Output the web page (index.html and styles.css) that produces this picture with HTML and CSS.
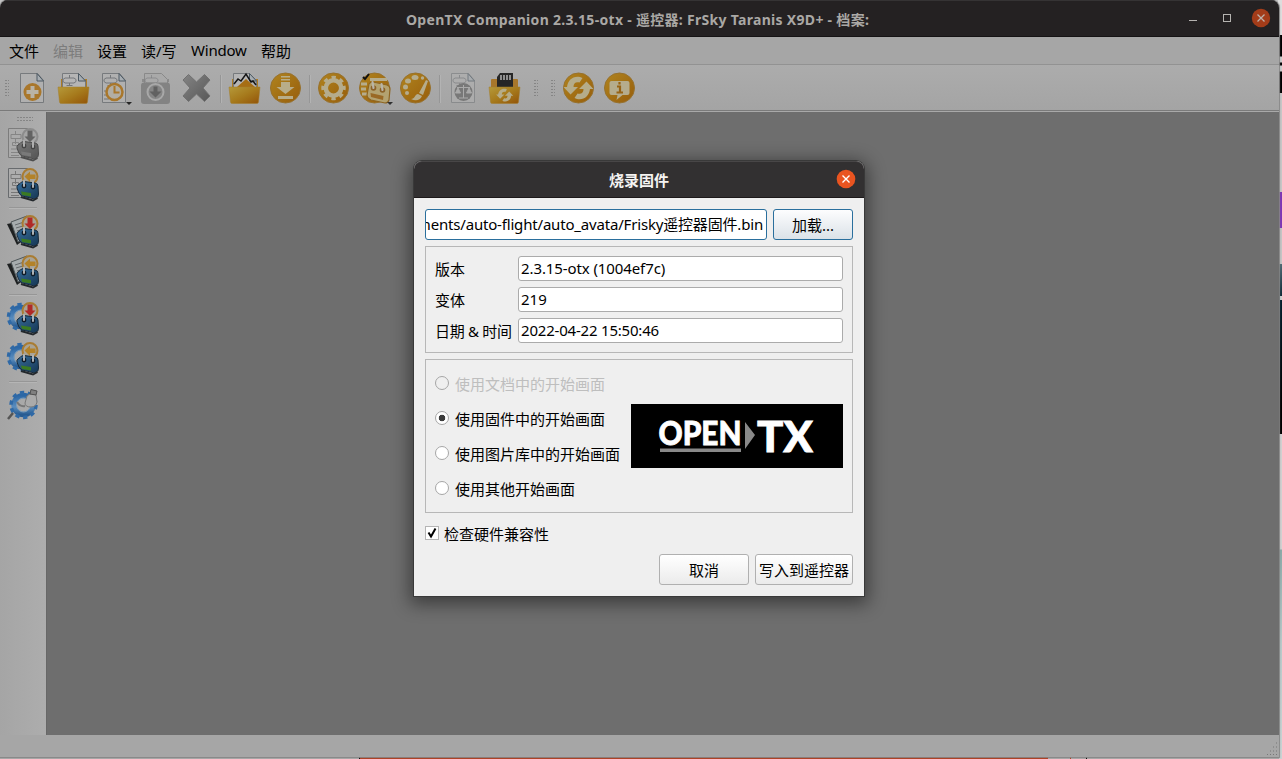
FILE: index.html
```
<!DOCTYPE html>
<html lang="zh-CN">
<head>
<meta charset="utf-8">
<title>OpenTX Companion</title>
<link rel="stylesheet" href="styles.css">
</head>
<body>
<svg class="defs" aria-hidden="true">
  <defs>
    <linearGradient id="gold" x1="0" y1="0" x2="1" y2="1"><stop offset="0" stop-color="#b0841f"/><stop offset="1" stop-color="#975d0b"/></linearGradient>
    <linearGradient id="folderFill" x1="0" y1="0" x2="1" y2="1"><stop offset="0" stop-color="#b5993a"/><stop offset=".5" stop-color="#a67a1c"/><stop offset="1" stop-color="#925308"/></linearGradient>
    <linearGradient id="greyFill" x1="0" y1="0" x2="1" y2="1"><stop offset="0" stop-color="#848484"/><stop offset="1" stop-color="#575757"/></linearGradient>
    <linearGradient id="radioFill" x1="0" y1="0" x2="1" y2="1"><stop offset="0" stop-color="#376d9a"/><stop offset="1" stop-color="#153653"/></linearGradient>
    <linearGradient id="gearFill" x1="0" y1="0" x2="0" y2="1"><stop offset="0" stop-color="#2c67a5"/><stop offset=".6" stop-color="#5a8dbe"/><stop offset="1" stop-color="#285b91"/></linearGradient>
    <g id="page"><path d="M8.500 8.500h17l6 7v22h-23z" fill="#b0b0b0" stroke="#777a7d"/><path d="M25 8.500v7.500h6.500z" fill="#a7adb2" stroke="#4c5963"/></g>
    <g id="model" fill="none" stroke="#74777a"><path d="M16.500 10v3M10 14.500l2-1.500h9l2 1.500v2l-2 1.500h-9l-2-1.500zM16.500 18v3M13.500 20.500h6"/></g>
    <g id="backpapers"><path d="M8 14v11h26V14h-3" fill="#ad7c25"/><path d="M9.500 8.500h16l7 7V27h-23z" fill="#b5b5b5" stroke="#777a7d"/><path d="M25.500 8.500v7.500h7z" fill="#a7adb2" stroke="#4c5963"/></g>
    <path id="folder" d="M5 22h31l-1.500 15q0 1.500-2 1.500h-24q-2 0-2-1.500z" fill="url(#folderFill)" stroke="#a27c2c" stroke-width=".5"/>
    <g id="disc"><circle cx="20.500" cy="23" r="15" fill="url(#gold)" stroke="#97712d"/></g>
    <g id="cycle"><path d="M5.500 22h3.500C10 15 15 10.500 22 12l2.500 1-3 4.500c-4-1-6 1-6 4.500h4.500l-7.500 7.500z" fill="#b5ac8a"/><path d="M35.500 24H32c-1 7-6 11.500-13 10l-2.500-1 3-4.500c4 1 6-1 6-4.500H21l7.500-7.500z" fill="#b5ac8a"/></g>
    <g id="radio">
      <path d="M20 19.500q1-2 4-2l11 1.500q3 .5 3 3l.500 8q0 3-2 4l-2 1-12-3q-3-1-4-4l-1.500-4q-.5-2 1-3z" fill="url(#radioFill)" stroke="#17293a"/>
      <path d="M21 33l12 3.500 4.500-2.500" fill="none" stroke="#23282c" stroke-width="2"/>
      <path d="M21 27.500l10 1.500v3.500l-9-1.500z" fill="#3b7a22"/>
      <circle cx="24" cy="22" r="2.400" fill="#101c28"/><circle cx="33" cy="23" r="2.400" fill="#101c28"/>
      <path d="M24 22v-5.500M33 23v-5.500" stroke="#aeb2b5" stroke-width="2" stroke-linecap="round"/>
    </g>
    <g id="ring"><circle cx="30" cy="12.500" r="7.500" fill="#a9a395" stroke="#a97c32" stroke-width="2"/></g>
    <path id="arrowLeft" d="M24.500 12.500l5.500-5v3h5.500v4.500h-5.500v3z" fill="#b38228"/>
    <path id="arrowDown" d="M30 18l-5.500-5.500h3V6.500h5v6h3z" fill="#b02a27"/>
    <g id="sidePage"><path d="M8.500 4.500h19v29h-19z" fill="#adadad" stroke="#686b6e"/><path d="M15.500 7v3M11 10.500h10v4H11zM15.500 15v5M12.500 18.500h6v3h-6zM11 25h8M11 28.500h8M11 31.500h8" fill="none" stroke="#777"/></g>
    <g id="chip"><path d="M7 13l10 21 4-3-9-19z" fill="#1e2021"/><path d="M11 11l16-6 6 18-15 8z" fill="#a6acae" stroke="#4e5659"/><path d="M15 14l9-3M16 17l7-2M17 20l6-2M18 23l5-2" stroke="#656a6d"/></g>
    <g id="gear"><circle cx="21" cy="19" r="9.500" fill="none" stroke="url(#gearFill)" stroke-width="5.500"/><circle cx="21" cy="19" r="12.500" fill="none" stroke="#2f69a6" stroke-width="3.500" stroke-dasharray="4.200 3.654"/><circle cx="21" cy="19" r="7" fill="none" stroke="#7d9dba" stroke-width="1"/></g>
  </defs>
</svg>

<div class="desktop">
  <div class="behind">
    <i class="b-top"></i><i class="b-black"></i><i class="b-light"></i><i class="b-purple"></i><i class="b-light2"></i><i class="b-sea"></i><i class="b-rest"></i>
  </div>
  <div class="behind-bottom"><i class="strip"></i><i class="tick"></i><i class="tick dark"></i></div>

  <main class="window">
    <header class="titlebar">
      <h1 class="title">OpenTX Companion 2.3.15-otx - 遥控器: FrSky Taranis X9D+ - 档案:</h1>
      <svg class="controls" width="90" height="36" viewBox="0 0 90 36">
        <path d="M0 20.500h8" stroke="#b5b3b0"/><rect x="34.500" y="14.500" width="7" height="7" fill="none" stroke="#b5b3b0"/>
        <circle cx="72" cy="18" r="9.200" fill="#a33c19"/><path d="M68.500 14.500l7 7m0-7l-7 7" stroke="#bdb1aa" stroke-width="1.300"/>
      </svg>
    </header>
    <nav class="menu">
      <span class="m1">文件</span><span class="m2 off">编辑</span><span class="m3">设置</span><span class="m4">读/写</span><span class="m5">Window</span><span class="m6">帮助</span>
    </nav>
    <div class="toolbar">
      <i class="grip first"></i>
      <svg class="tool" viewBox="0 0 41 45"><use href="#page"/><circle cx="20.500" cy="27" r="9" fill="#a9772b"/><path d="M20.500 21v12M14.500 27h12" stroke="#b9b3a6" stroke-width="4"/></svg>
      <svg class="tool" viewBox="0 0 41 45"><use href="#backpapers"/><use href="#model"/><use href="#folder"/></svg>
      <svg class="tool" viewBox="0 0 41 45"><use href="#page"/><use href="#model"/><path d="M10 26h4M10 30h4M10 34h5" stroke="#777"/><circle cx="20.500" cy="27" r="8" fill="#b2aea4" stroke="#a9772b" stroke-width="2.500"/><path d="M20.500 21v6.500h5" fill="none" stroke="#a9772b" stroke-width="2"/><path d="M32 37h6l-3 3z" fill="#252525"/></svg>
      <svg class="tool" viewBox="0 0 41 45"><path d="M7 17v-3h27v3" fill="#8b8b8b"/><path d="M9.500 17V8.500h17l6 6V20h-23z" fill="#a9a9a9" stroke="#898989"/><use href="#model" opacity=".55"/><rect x="6" y="17.500" width="29" height="21.500" rx="3" fill="#838383"/><circle cx="20.500" cy="27" r="8" fill="#858585" stroke="#a8a8a8" stroke-width="2"/><path d="M18.500 21.500h4v5h4l-6 6-6-6h4z" fill="#616161"/></svg>
      <svg class="tool" viewBox="0 0 41 45"><path d="M12.500 9.500l8 7.500 8-7.500 5.500 5.500-7 8 7 8-5.500 5.500-8-7.500-8 7.500L7 31l7-8-7-8z" fill="url(#greyFill)" stroke="#707070" stroke-linejoin="round"/></svg>
      <i class="sep"></i>
      <svg class="tool" viewBox="0 0 41 45"><use href="#backpapers"/><path d="M13 22l9-8 9 8z" fill="#a66e14"/><path d="M10 19l4-5 3 2 5-7 5 8 2-1 3 4" fill="none" stroke="#151515" stroke-width="1.500"/><use href="#folder"/></svg>
      <svg class="tool" viewBox="0 0 41 45"><use href="#disc"/><path d="M16 11h9v1.500h-9zM16 14h9v1.500h-9zM16 17h9v5h4.500L20.500 29l-9-7H16zM13 31h15v3H13z" fill="#b8ad89"/></svg>
      <i class="sep"></i>
      <svg class="tool" viewBox="0 0 41 45"><use href="#disc"/><circle cx="20.500" cy="23" r="7.700" fill="none" stroke="#b5ac8d" stroke-width="4.500"/><circle cx="20.500" cy="23" r="10.500" fill="none" stroke="#b5ac8d" stroke-width="3.500" stroke-dasharray="4.100 4.147" transform="rotate(-12 20.500 23)"/></svg>
      <svg class="tool" viewBox="0 0 41 45"><use href="#disc"/><path d="M16 14.500h17M7 19h6M7 24h5M8 29h5" stroke="#b5ac8d" stroke-width="3"/><path d="M9 12l2 2 4-5" stroke="#111" stroke-width="2" fill="none"/><path d="M15 19q1-2 4-2l14 3q3 1 3 4l-1 11q-1 3-4 3l-14-3q-4-2-4-5z" fill="#b3a270" stroke="#8e6521" stroke-width="1.200"/><circle cx="19.500" cy="23" r="2.800" fill="#8b6128"/><circle cx="28.500" cy="25" r="2.800" fill="#8b6128"/><path d="M19.500 23l-1-6M28.500 25l-1-6" stroke="#b9b4a7" stroke-width="2.200" stroke-linecap="round"/><path d="M16.500 28l13 3-.5 4-12-3z" fill="#9a6925"/><path d="M33 37h6l-3 3z" fill="#303030"/></svg>
      <svg class="tool" viewBox="0 0 41 45"><use href="#disc"/><g fill="#b5ac8d"><ellipse cx="20" cy="12.500" rx="3.500" ry="2.500"/><ellipse cx="13" cy="16" rx="3" ry="2.500"/><circle cx="10.500" cy="22" r="2.500"/><circle cx="12" cy="28" r="2"/><circle cx="27.500" cy="13" r="1.700"/><path d="M31 15l2 1-5 14-4-2zM23 29l4 2c-2 5-7 5-11 3 4 0 4-5 7-5z"/></g></svg>
      <i class="sep"></i>
      <svg class="tool" viewBox="0 0 41 45"><g opacity=".6"><use href="#page"/><use href="#model"/></g><circle cx="20.500" cy="27" r="9" fill="#787878"/><path d="M20.500 20v13M14 22.500h13M16 33h9M15 23l-2.500 5h5zM26 23l-2.500 5h5z" stroke="#aaa" fill="#aaa"/></svg>
      <svg class="tool" viewBox="0 0 41 45"><path d="M7 23v-8q0-1 1-1h25q1 0 1 1v8z" fill="#a8772b"/><path d="M13 22V12l3-4h13v14z" fill="#262626"/><path d="M17 10v5M20 10v5M23 10v5M26 10v5" stroke="#aaa" stroke-width="1.600"/><use href="#folder"/><use href="#cycle" transform="translate(9 17) scale(.57)"/></svg>
      <i class="grip second"></i><i class="grip third"></i>
      <svg class="tool" viewBox="0 0 41 45"><use href="#disc"/><use href="#cycle"/></svg>
      <svg class="tool" viewBox="0 0 41 45"><use href="#disc"/><path d="M12.500 16h16q2 0 2 2v10q0 2-2 2h-5l-6 5 1-5h-6q-2 0-2-2V18q0-2 2-2z" fill="#b5ac8d"/><path d="M20.500 17v2.500M18 21.500h3v5.500M17.500 27.500h6.500" fill="none" stroke="#976315" stroke-width="2.200"/></svg>
    </div>
    <div class="workspace">
      <aside class="side">
        <i class="grip side-grip"></i>
        <svg class="stool grey" viewBox="0 0 46 40"><use href="#sidePage"/><use href="#ring"/><use href="#arrowDown"/><use href="#radio"/></svg>
        <svg class="stool" viewBox="0 0 46 40"><use href="#sidePage"/><use href="#ring"/><use href="#arrowLeft"/><use href="#radio"/></svg>
        <i class="hsep"></i>
        <svg class="stool" viewBox="0 0 46 40"><use href="#chip"/><use href="#ring"/><use href="#arrowDown"/><use href="#radio"/></svg>
        <svg class="stool" viewBox="0 0 46 40"><use href="#chip"/><use href="#ring"/><use href="#arrowLeft"/><use href="#radio"/></svg>
        <i class="hsep"></i>
        <svg class="stool" viewBox="0 0 46 40"><use href="#gear"/><use href="#ring"/><use href="#arrowDown"/><use href="#radio"/></svg>
        <svg class="stool" viewBox="0 0 46 40"><use href="#gear"/><use href="#ring"/><use href="#arrowLeft"/><use href="#radio"/></svg>
        <i class="hsep"></i>
        <svg class="stool" viewBox="0 0 46 40"><use href="#gear" transform="translate(2.500 1)"/><path d="M8 34l5-6" fill="none" stroke="#555" stroke-width="2.500"/><path d="M17 17q3 5 8 4" fill="none" stroke="#777" stroke-width="2"/><path d="M27 11q4-4 9-1l1 7q-1 5-6 5-6 0-6-4z" fill="#aaa" stroke="#777"/><path d="M31 4.500l6 1.500-1 4-6-1z" fill="#808080" stroke="#505050"/></svg>
      </aside>
      <section class="canvas"></section>
    </div>
    <footer class="status"><svg width="16" height="14" viewBox="0 0 16 14"><path d="M13 1h1M10 5h1M13 5h1M7 9h1M10 9h1M13 9h1M4 12.500h1M7 12.500h1M10 12.500h1M13 12.500h1" stroke="#777"/></svg></footer>
  </main>

  <section class="dialog">
    <header class="dialog-title"><h2>烧录固件</h2>
      <svg width="20" height="20" viewBox="0 0 20 20"><circle cx="10" cy="10" r="9.300" fill="#e95420"/><path d="M6.500 6.500l7 7m0-7l-7 7" stroke="#fff" stroke-width="1.400"/></svg>
    </header>
    <div class="dialog-body">
      <div class="file-row"><div class="path"><span>ments/auto-flight/auto_avata/Frisky遥控器固件.bin</span></div><button class="btn focus">加载...</button></div>
      <div class="group info">
        <span class="label">版本</span><div class="field"><span class="v1">2.3.15-otx (1004ef7c)</span></div>
        <span class="label">变体</span><div class="field"><span class="v2">219</span></div>
        <span class="label tight">日期 &amp; 时间</span><div class="field"><span class="v3">2022-04-22 15:50:46</span></div>
      </div>
      <div class="group splash">
        <div class="radios">
          <div class="choice disabled"><i class="dot"></i><span>使用文档中的开始画面</span></div>
          <div class="choice"><i class="dot on"></i><span>使用固件中的开始画面</span></div>
          <div class="choice"><i class="dot"></i><span>使用图片库中的开始画面</span></div>
          <div class="choice"><i class="dot"></i><span>使用其他开始画面</span></div>
        </div>
        <svg class="logo" width="212" height="64" viewBox="0 0 212 64">
          <rect width="212" height="64"/>
          <text class="logo-text" x="27.500" y="41" font-size="32" textLength="83" lengthAdjust="spacingAndGlyphs">OPEN</text>
          <path d="M29 44.500h81v3.500H29zM114 18l10 13-10 14z" fill="#898989"/>
          <text class="logo-text" x="126" y="48" font-size="42" textLength="56" lengthAdjust="spacingAndGlyphs">TX</text>
        </svg>
      </div>
      <div class="check"><i class="box"><svg width="12" height="12" viewBox="0 0 12 12"><path d="M2.500 5.500l2.500 4 4.500-8" fill="none" stroke="#000" stroke-width="2"/></svg></i><span>检查硬件兼容性</span></div>
      <div class="actions"><button class="btn cancel">取消</button><button class="btn write">写入到遥控器</button></div>
    </div>
  </section>
</div>
</body>
</html>
```
FILE: styles.css
```
* { box-sizing: border-box; }
body { margin: 0; font: 15px/20px "Noto Sans", "Noto Sans CJK SC", sans-serif; color: #000; overflow: hidden; }
i { font-style: normal; display: block; }
.defs { position: absolute; width: 0; height: 0; }
.desktop { position: relative; width: 1282px; height: 759px; background: #c4c4c4; overflow: hidden; }

/* Content of the windows that lie behind the main one */
.behind { position: absolute; inset: 0 0 0 auto; width: 4px; overflow: hidden; }
.b-top { height: 35px; background: #ddd; }
.b-black { height: 58px; background: linear-gradient(#000 21px, #ccc 22px 27px, #000 28px 30px, #ccc 31px 36px, #000 37px); }
.b-light { height: 99px; background: #c6c6c6; }
.b-purple { height: 36px; background: #7d35b5; }
.b-light2 { height: 36px; background: #c4c4c4; }
.b-sea { height: 170px; background: linear-gradient(#ccc, #ccc) 2px 32px / 2px 4px no-repeat, linear-gradient(#4f6a74, #04202d 22%, #000 85%); }
.b-rest { height: 325px; background: linear-gradient(#d0d0d0 115px, #8aaaa8 116px, #b7c9c9 210px, #c9d3d3); }
.behind-bottom { position: absolute; left: 0; bottom: 0; width: 1279px; height: 2px; display: flex; background: #aaa; padding-left: 359px; }
.strip { width: 689px; height: 2px; background: #b33b1c; border-left: 1px solid #000; }
.tick { width: 1px; height: 2px; margin-left: 22px; background: #b33b1c; }
.tick.dark { margin-left: 15px; background: #000; }

.window { position: relative; width: 1279px; height: 757px; display: flex; flex-direction: column; background: #a6a6a6; border-radius: 8px 8px 0 0; overflow: hidden; box-shadow: 0 0 1px 1px #858585; }
.titlebar { height: 37px; flex: none; display: flex; align-items: center; background: #242122; border-top: 1px solid #353334; border-bottom: 1px solid #151314; }
.title { margin: 2px 0 0 406px; width: 783px; font-size: 14px; line-height: 20px; font-weight: 700; color: #aaa8a5; white-space: nowrap; letter-spacing: .3px; }
.controls { margin-top: -1px; }
.menu { height: 28px; flex: none; display: flex; padding: 4px 0 0 9px; border-bottom: 1px solid #929292; white-space: nowrap; }
.menu span { line-height: 20px; }
.m1, .m2, .m3 { width: 44px; }
.m4 { width: 50px; }
.m5 { width: 70px; letter-spacing: -.2px; margin-top: -1px; }
.off { color: #7c7c7c; }
.toolbar { height: 47px; flex: none; display: flex; background: linear-gradient(#acacac, #a4a4a4); border-bottom: 1px solid #a9a9a9; box-shadow: inset 0 -1px #7a7a7a; }
.tool { width: 41px; height: 45px; flex: none; }
.sep { width: 7px; flex: none; height: 28px; margin-top: 10px; background: linear-gradient(90deg, transparent 3px, #969696 3px 4px, #b3b3b3 4px 5px, transparent 5px); }
.grip { flex: none; width: 5px; height: 17px; margin-top: 15px; background: conic-gradient(from 90deg at 1px 1px, transparent 75%, #858585 0) 0 0 / 3px 3px; }
.first { margin-left: 4px; margin-right: 3px; }
.second { margin-left: 8px; }
.third { margin-left: 12px; margin-right: 3px; }
.workspace { flex: 1; display: flex; min-height: 0; }
.side { width: 46px; display: flex; flex-direction: column; background: linear-gradient(90deg, #a5a5a5, #adadad); }
.side-grip { width: 17px; height: 5px; margin: 5px 0 2px 16px; }
.stool { width: 46px; height: 40px; flex: none; }
.grey { filter: grayscale(1); opacity: .7; }
.hsep { width: 28px; height: 7px; flex: none; margin-left: 9px; background: linear-gradient(transparent 3px, #969696 3px 4px, #b5b5b5 4px 5px, transparent 5px); }
.canvas { flex: 1; background: #6e6e6e; border-left: 1px solid #676767; }
.status { height: 22px; flex: none; display: flex; justify-content: flex-end; align-items: flex-end; background: #a6a6a6; padding-bottom: 1px; }

.dialog { position: absolute; left: 414px; top: 161px; width: 450px; height: 435px; background: #efefef; border-radius: 8px 8px 0 0; box-shadow: 0 0 0 1px #393939, 0 4px 18px 4px rgba(0, 0, 0, .45); }
.dialog-title { height: 37px; display: grid; grid-template-columns: 40px 1fr 40px; align-items: center; background: #323031; border-top: 1px solid #484647; border-bottom: 1px solid #1d191a; border-radius: 8px 8px 0 0; }
.dialog-title h2 { grid-column: 2; margin: 0; font-size: 15px; line-height: 20px; text-align: center; color: #f5f4f2; }
.dialog-title svg { margin: -1px 0 0 12px; }
.dialog-body { padding: 11px 11px 0; display: flex; flex-direction: column; }
.file-row { display: flex; gap: 6px; height: 31px; }
.path { width: 342px; border: 1px solid #2a6f9d; border-radius: 3px; background: #fff; display: flex; justify-content: flex-end; align-items: center; overflow: hidden; padding: 0 3px 2px 0; white-space: nowrap; }
.path span { letter-spacing: -.18px; }
.btn { height: 31px; padding: 1px 0 0; border: 1px solid #b0b0b0; border-radius: 3px; background: linear-gradient(#fff, #ebebeb); color: #000; font: inherit; white-space: nowrap; }
.focus { width: 80px; border-color: #2a6f9d; background: linear-gradient(#fdfdfe, #dbe2e8); }
.group { border: 1px solid #b7b7b7; margin-top: 6px; }
.info { height: 107px; display: grid; grid-template-columns: 83px 325px; grid-auto-rows: 25px; row-gap: 6px; padding: 9px; }
.label { line-height: 27px; white-space: nowrap; }
.tight { letter-spacing: -.3px; }
.field { border: 1px solid #ababab; border-radius: 3px; background: #fff; padding-left: 2px; line-height: 22px; white-space: nowrap; }
.v1 { letter-spacing: -.1px; }
.v3 { letter-spacing: -.2px; }
.splash { height: 154px; display: flex; justify-content: space-between; align-items: center; padding: 0 9px; }
.radios { display: flex; flex-direction: column; gap: 15px; white-space: nowrap; }
.choice { display: flex; height: 20px; gap: 6px; }
.choice span { line-height: 20px; }
.dot { width: 14px; height: 14px; margin-top: 2px; border: 1px solid #a6a6a6; border-radius: 50%; background: #fff; }
.dot.on { background: radial-gradient(circle, #3b3b3b 3px, #fff 3.600px); }
.disabled { color: #bebebe; }
.disabled .dot { background: #efefef; }
.logo-text { font-family: Lato, sans-serif; font-weight: 900; fill: #fff; stroke: #fff; stroke-width: .8px; }
.check { display: flex; gap: 5px; height: 20px; margin-top: 11px; }
.check span { line-height: 20px; }
.box { width: 14px; height: 14px; margin-top: 2px; border: 1px solid #b5b5b5; background: #fff; }
.box svg { display: block; }
.actions { display: flex; justify-content: flex-end; gap: 6px; margin-top: 10px; }
.cancel { width: 90px; }
.write { width: 98px; }
```
